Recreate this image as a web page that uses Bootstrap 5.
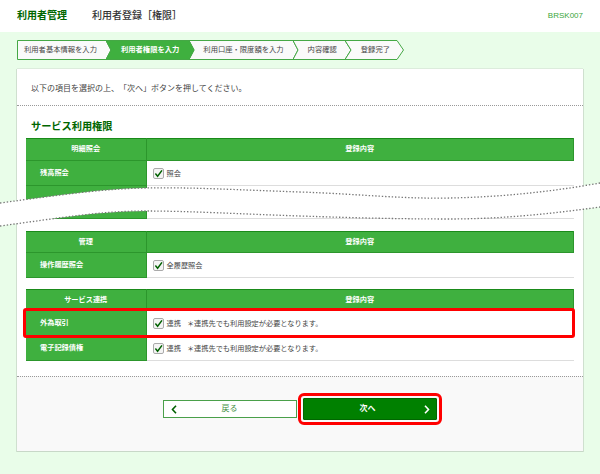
<!DOCTYPE html>
<html lang="ja">

<head>
  <meta charset="UTF-8">
  <title>利用者登録［権限］</title>
  <meta name="viewport" content="width=device-width, initial-scale=1">
  <link href="https://cdn.jsdelivr.net/npm/bootstrap@5.3.2/dist/css/bootstrap.min.css" rel="stylesheet">
  <style>
    body {
      background-color: #e9fde9;
      font-family: "Liberation Sans", "Noto Sans CJK JP", sans-serif;
      font-size: 8px;
      line-height: 1.2;
      color: #444;
      height: 474px;
      overflow: hidden;
      text-spacing-trim: space-all;
    }

    .top-bar {
      height: 32px;
      padding: 0 17px;
      background-color: #fff;
      font-size: 10px;
      font-weight: 500;
    }

    .top-title {
      color: #006600;
      font-weight: 700;
      width: 75px;
    }

    .top-sub {
      color: #333;
    }

    .screen-id {
      color: #3aa63a;
      font-size: 8px;
    }

    .step-bar {
      height: 20px;
      margin: 8px 0 9px 17px;
      width: 387px;
      padding-left: 7px;
      gap: 24px;
      font-size: 7.3px;
      color: #444;
    }

    .step-shape {
      position: absolute;
      left: 0;
      top: 0;
    }

    .step-label {
      position: relative;
    }

    .step-now {
      color: #fff;
      font-weight: 700;
    }

    .main-panel {
      margin: 0 17px;
      height: 383px;
      background-color: #fff;
      box-shadow: -1px 0 0 #cfe0cf, 1px 0 0 #cfe0cf, 0 -1px 0 #dcecdc;
    }

    .intro {
      height: 37px;
      padding: 4px 14px 0;
      border-bottom: 1px dotted #999;
    }

    .section-title {
      height: 32px;
      padding: 15px 14px 0;
      font-size: 10.2px;
      font-weight: 700;
      color: #006600;
    }

    .tables {
      padding: 0 9px;
    }

    .perm-table {
      table-layout: fixed;
      margin-bottom: 0;
      border-top: 1px solid #1a8a1a;
    }

    .perm-table th,
    .perm-table td {
      padding: 0 0 0 6px;
      vertical-align: middle;
      border-bottom: 1px solid #ddd;
      font-size: 7.2px;
      font-weight: 400;
      color: #444;
      background-color: #fff;
    }

    .perm-table th {
      background-color: #3fb03f;
      color: #fff;
      font-weight: 700;
      border-bottom: 1px solid #2c962c;
      border-right: 1px solid #2c962c;
      padding-left: 14px;
    }

    .perm-table thead th {
      height: 22px;
      padding-left: 0;
      text-align: center;
    }

    .perm-table.slim-head thead th {
      height: 21px;
    }

    .perm-table tbody tr {
      height: 25px;
    }

    .perm-table tbody tr.tall-row {
      height: 33px;
    }

    .perm-table tbody tr.wide-row {
      height: 26px;
    }

    .perm-table tbody tr.short-row {
      height: 24px;
    }

    .perm-table col:first-child {
      width: 120px;
    }

    .gap-first {
      margin-bottom: 12px;
    }

    .gap-second {
      margin-bottom: 11px;
    }

    .tick-box {
      width: 11px;
      height: 11px;
      vertical-align: -3px;
      margin-right: 3px;
    }

    .note-text {
      margin-left: 6px;
    }

    .red-row {
      position: absolute;
      left: -3px;
      right: -1px;
      top: 19px;
      height: 30px;
      border: 3px solid #f00;
      border-radius: 3px;
    }

    .foot-area {
      height: 76px;
      margin-top: 15px;
      padding-bottom: 10px;
      gap: 6px;
      background-color: #f9f9f9;
      border-top: 1px dotted #999;
      border-bottom: 1px solid #c8d8c8;
    }

    .nav-btn {
      width: 134px;
      padding: 0 6px 0 7px;
      border-radius: 0;
      font-size: 8px;
      font-weight: 400;
    }

    .btn-back {
      height: 18px;
      color: #3f8f3f;
      background-color: #fff;
      border: 1px solid #4aa04a;
    }

    .btn-next {
      height: 22px;
      color: #fff;
      font-weight: 700;
      background-color: #008000;
      border: 1px solid #006600;
      outline: 3px solid #f00;
      outline-offset: 2px;
      border-radius: 1px;
    }

    .wave-cut {
      position: absolute;
      left: 0;
      top: 0;
    }
  </style>
</head>

<body>
  <div class="top-bar d-flex align-items-center">
    <div class="top-title">利用者管理</div>
    <div class="top-sub flex-grow-1">利用者登録［権限］</div>
    <div class="screen-id">BRSK007</div>
  </div>

  <div class="step-bar position-relative d-flex align-items-center">
    <svg class="step-shape" width="388" height="20" viewBox="0 0 388 20">
      <g fill="#fafafa" stroke="#45a845" stroke-width="1">
        <path d="M.5 .5H89L94 10L89 19.5H.5Z" />
        <path d="M172 .5H276L281 10L276 19.5H172L177 10Z" />
        <path d="M276 .5H328L334 10L328 19.5H276L281 10Z" />
        <path d="M328 .5H380L386.5 10L380 19.5H328L334 10Z" />
        <path d="M89 .5H172L177 10L172 19.5H89L94 10Z" fill="#3fb03f" />
      </g>
    </svg>
    <span class="step-label">利用者基本情報を入力</span>
    <span class="step-label step-now">利用者権限を入力</span>
    <span class="step-label">利用口座・限度額を入力</span>
    <span class="step-label">内容確認</span>
    <span class="step-label">登録完了</span>
  </div>

  <div class="main-panel">
    <div class="intro d-flex align-items-center">以下の項目を選択の上、「次へ」ボタンを押してください。</div>
    <div class="section-title">サービス利用権限</div>
    <div class="tables">
      <table class="table perm-table gap-first">
        <colgroup><col><col></colgroup>
        <thead>
          <tr><th>明細照会</th><th>登録内容</th></tr>
        </thead>
        <tbody>
          <tr>
            <th>残高照会</th>
            <td><svg class="tick-box" viewBox="0 0 11 11"><rect x=".5" y=".5" width="10" height="10" rx="1.5" fill="#f4f4f4" stroke="#aaa" /><path d="M2.4 5.6L4.6 8.2L9 2.4" fill="none" stroke="#006000" stroke-width="1.5" /></svg>照会</td>
          </tr>
          <tr class="tall-row"><th></th><td></td></tr>
        </tbody>
      </table>

      <table class="table perm-table slim-head gap-second">
        <colgroup><col><col></colgroup>
        <thead>
          <tr><th>管理</th><th>登録内容</th></tr>
        </thead>
        <tbody>
          <tr>
            <th>操作履歴照会</th>
            <td><svg class="tick-box" viewBox="0 0 11 11"><rect x=".5" y=".5" width="10" height="10" rx="1.5" fill="#f4f4f4" stroke="#aaa" /><path d="M2.4 5.6L4.6 8.2L9 2.4" fill="none" stroke="#006000" stroke-width="1.5" /></svg>全履歴照会</td>
          </tr>
        </tbody>
      </table>

      <div class="position-relative">
        <table class="table perm-table slim-head">
          <colgroup><col><col></colgroup>
          <thead>
            <tr><th>サービス連携</th><th>登録内容</th></tr>
          </thead>
          <tbody>
            <tr class="wide-row">
              <th>外為取引</th>
              <td><svg class="tick-box" viewBox="0 0 11 11"><rect x=".5" y=".5" width="10" height="10" rx="1.5" fill="#f4f4f4" stroke="#aaa" /><path d="M2.4 5.6L4.6 8.2L9 2.4" fill="none" stroke="#006000" stroke-width="1.5" /></svg>連携<span class="note-text">＊連携先でも利用設定が必要となります。</span></td>
            </tr>
            <tr class="short-row">
              <th>電子記録債権</th>
              <td><svg class="tick-box" viewBox="0 0 11 11"><rect x=".5" y=".5" width="10" height="10" rx="1.5" fill="#f4f4f4" stroke="#aaa" /><path d="M2.4 5.6L4.6 8.2L9 2.4" fill="none" stroke="#006000" stroke-width="1.5" /></svg>連携<span class="note-text">＊連携先でも利用設定が必要となります。</span></td>
            </tr>
          </tbody>
        </table>
        <div class="red-row"></div>
      </div>
    </div>

    <div class="foot-area d-flex justify-content-center align-items-center">
      <button type="button" class="btn nav-btn btn-back d-flex align-items-center">
        <svg width="6" height="9" viewBox="0 0 6 9"><path d="M5 .8L1.5 4.5L5 8.2" fill="none" stroke="#006000" stroke-width="1.6" /></svg>
        <span class="flex-grow-1 text-center pe-2">戻る</span>
      </button>
      <button type="button" class="btn nav-btn btn-next d-flex align-items-center">
        <span class="flex-grow-1 text-center">次へ</span>
        <svg width="6" height="9" viewBox="0 0 6 9"><path d="M1 .8L4.5 4.5L1 8.2" fill="none" stroke="#fff" stroke-width="1.6" /></svg>
      </button>
    </div>
  </div>

  <svg class="wave-cut" width="600" height="240" viewBox="0 0 600 240">
    <path d="M0 203C60 195 100 189 145 188S240 190 300 192S400 199 450 198S550 192 600 183V207C550 214 500 219 450 219S360 218 300 216S200 210 145 211S60 218 0 226Z" fill="#fff" />
    <g fill="none" stroke="#777" stroke-width="1.3" stroke-dasharray="1.4 1.9">
      <path d="M0 203C60 195 100 189 145 188S240 190 300 192S400 199 450 198S550 192 600 183" />
      <path d="M0 226C60 218 100 211 145 211S240 214 300 216S400 219 450 219S550 214 600 207" />
    </g>
  </svg>
</body>

</html>
